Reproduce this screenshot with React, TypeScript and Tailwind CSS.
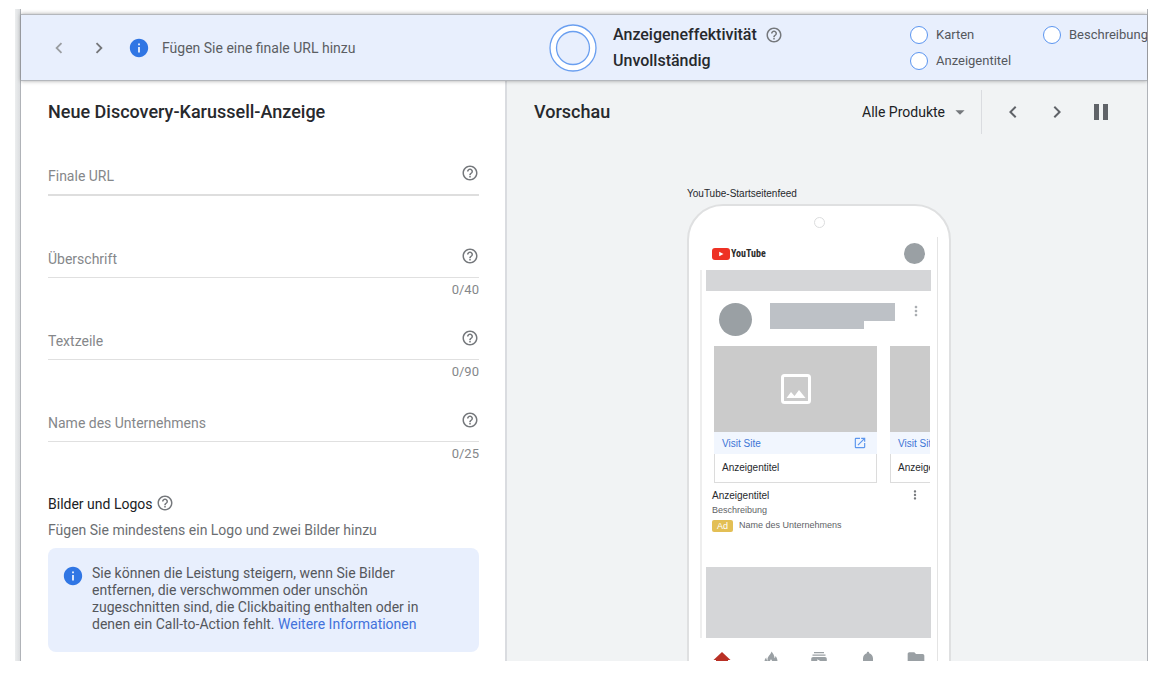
import { useState } from 'react';
import {
  MdArrowDropDown,
  MdChevronLeft,
  MdChevronRight,
  MdFolder,
  MdHelpOutline,
  MdInfo,
  MdMoreVert,
  MdOpenInNew,
} from 'react-icons/md';

const fields = [
  { id: 'url', label: 'Finale URL' },
  { id: 'headline', label: 'Überschrift', max: 40 },
  { id: 'text', label: 'Textzeile', max: 90 },
  { id: 'company', label: 'Name des Unternehmens', max: 25 },
];

function HelpButton({ label }: { label: string }) {
  return (
    <button type="button" aria-label={label} className="shrink-0 text-[#75787c]">
      <MdHelpOutline className="w-[18px] h-[18px]" />
    </button>
  );
}

function Header() {
  return (
    <header className="relative z-10 grid grid-cols-[528px_1fr] h-[67px] bg-[#e8effd] border-y border-[#b4b7bc] shadow-[0_0_4px_rgba(0,0,0,0.35)]">
      <div className="flex items-center gap-[18px] pl-[27px]">
        <button type="button" aria-label="Zurück" className="text-[#9a9da1]">
          <MdChevronLeft className="w-[22px] h-[22px]" />
        </button>
        <button type="button" aria-label="Weiter" className="text-[#757679]">
          <MdChevronRight className="w-[22px] h-[22px]" />
        </button>
        <div className="flex items-center gap-3">
          <MdInfo className="w-[22px] h-[22px] text-[#3076e4]" />
          <p className="text-sm text-[#5b5e63]">Fügen Sie eine finale URL hinzu</p>
        </div>
      </div>

      <div className="flex items-center min-w-0 overflow-hidden">
        <svg viewBox="0 0 48 48" className="w-12 h-12 shrink-0">
          <circle cx="24" cy="24" r="23" fill="#fff" stroke="#6a9ff0" strokeWidth="1.3" />
          <circle cx="24" cy="24" r="16.5" fill="#e8effd" stroke="#6a9ff0" strokeWidth="1.3" />
        </svg>
        <div className="ml-4 w-[297px] shrink-0 text-base font-medium leading-[26px] text-[#27292d]">
          <div className="flex items-center gap-2">
            Anzeigeneffektivität
            <HelpButton label="Hilfe zur Anzeigeneffektivität" />
          </div>
          <div>Unvollständig</div>
        </div>
        <ul className="grid grid-cols-[133px_133px] shrink-0 text-[13px] leading-[26px] text-[#55585d]">
          {['Karten', 'Beschreibung', 'Anzeigentitel'].map((item) => (
            <li key={item} className="flex items-center gap-2">
              <span className="w-[18px] h-[18px] rounded-full bg-white border border-[#5b95f0]" />
              {item}
            </li>
          ))}
        </ul>
      </div>
    </header>
  );
}

function AdForm() {
  const [values, setValues] = useState<Record<string, string>>({});

  return (
    <section className="bg-white pl-[27px] pr-[26px] pt-[9px] border-r-2 border-[#dadce0]">
      <h1 className="text-lg font-medium leading-[44px] text-[#27292d]">Neue Discovery-Karussell-Anzeige</h1>

      <form className="mt-6 flex flex-col gap-[21px]">
        {fields.map((f) => (
          <div key={f.id}>
            <div className={`flex ${f.max ? 'border-b border-[#e0e0e0]' : 'border-b-2 border-[#dedede]'}`}>
              <label htmlFor={f.id} className="text-sm leading-9 text-[#85878a]">{f.label}</label>
              <input
                id={f.id}
                type="text"
                maxLength={f.max}
                value={values[f.id] || ''}
                onChange={(e) => setValues({ ...values, [f.id]: e.target.value })}
                className="flex-1 min-w-0 h-9 px-3 text-sm outline-none"
              />
              <div className="pt-1.5">
                <HelpButton label={`Hilfe zu ${f.label}`} />
              </div>
            </div>
            <div className="h-6 text-right text-[13px] leading-6 text-[#85878a]">
              {f.max && `${(values[f.id] || '').length}/${f.max}`}
            </div>
          </div>
        ))}
      </form>

      <div className="mt-7">
        <div className="flex items-start gap-1">
          <h2 className="text-sm leading-5 text-[#202124]">Bilder und Logos</h2>
          <HelpButton label="Hilfe zu Bildern und Logos" />
        </div>
        <p className="mt-1.5 text-sm leading-5 text-[#6b6e72]">Fügen Sie mindestens ein Logo und zwei Bilder hinzu</p>
        <div className="mt-2 flex gap-2 rounded-lg bg-[#e8effd] pl-3.5 pr-10 pt-[17px] pb-[19px]">
          <MdInfo className="w-[22px] h-[22px] shrink-0 text-[#3076e4]" />
          <p className="text-sm leading-[17px] text-[#55575c]">
            Sie können die Leistung steigern, wenn Sie Bilder entfernen, die verschwommen oder unschön zugeschnitten
            sind, die Clickbaiting enthalten oder in denen ein Call-to-Action fehlt.{' '}
            <a href="#info" className="text-[#4272db]">Weitere Informationen</a>
          </p>
        </div>
      </div>
    </section>
  );
}

function CarouselCard() {
  return (
    <article className="w-[163px] shrink-0">
      <div className="h-[86px] bg-[#cbcbcb] flex items-center justify-center">
        <svg viewBox="0 0 30 30" className="w-[30px] h-[30px]">
          <rect x="1.5" y="1.5" width="27" height="27" rx="2" fill="none" stroke="#fff" strokeWidth="3" />
          <path d="M5.5 24l4.5-6 3.5 4 4.5-6 6.5 8z" fill="#fff" />
        </svg>
      </div>
      <div className="h-[22px] pl-2 pr-2.5 bg-[#f1f6fe] flex items-center justify-between text-[10px] text-[#3d75d6]">
        <a href="#site">Visit Site</a>
        <MdOpenInNew className="w-[14px] h-[14px] text-[#5c96ee]" />
      </div>
      <div className="pl-[7px] border border-t-0 border-[#dcdcdc] text-[10px] leading-[28px] text-[#27292d]">
        Anzeigentitel
      </div>
    </article>
  );
}

function PhoneNav() {
  return (
    <nav className="pt-[11px] pb-6 pl-3 pr-[11px] flex justify-between text-[#9aa0a4]">
      <svg viewBox="0 0 20 20" className="w-5 h-5" fill="#b93025">
        <path d="M10 3l8.5 8H16v7h-4v-5H8v5H4v-7H1.500z" />
      </svg>
      <svg viewBox="0 0 20 20" className="w-5 h-5" fill="currentColor">
        <path d="M10.500 2.500c-.5 3-4 4.500-4 8 0 .5.2 1 .5 1.500C5.700 11.300 5.200 10 5.300 8.500 3.800 10 3.500 11.500 3.500 13c0 3.300 2.900 5.500 6.500 5.500s6.500-2.400 6.500-6c0-2.200-.8-4-2-5.500 0 1-.3 1.800-1 2.300C13.500 6.500 12 4.500 10.500 2.500zM10 10c.2 1.500 2 2 2 4 0 1.200-.9 2-2 2s-2-.8-2-2c0-1.500 1.500-2.200 2-4z" />
      </svg>
      <svg viewBox="0 0 20 20" className="w-5 h-5" fill="currentColor">
        <path d="M5 3h10v1.200H5zM3.500 5.500h13v1.200h-13zM4 8h12a1.800 1.800 0 0 1 1.800 1.800v6.400A1.800 1.800 0 0 1 16 18H4a1.800 1.800 0 0 1-1.800-1.800V9.800A1.800 1.800 0 0 1 4 8zm4.300 2.300v5.400L13 13z" />
      </svg>
      <svg viewBox="0 0 20 20" className="w-5 h-5" fill="currentColor">
        <path d="M10 2.700c.7 0 1.200.5 1.200 1.200v.4c2.400.6 3.800 2.700 3.800 5.200v4l1.600 1.600v.9H3.400v-.9L5 13.500v-4c0-2.500 1.400-4.600 3.800-5.200v-.4c0-.7.5-1.200 1.200-1.200zM8.400 16.800h3.200a1.600 1.600 0 0 1-3.200 0z" />
      </svg>
      <MdFolder className="w-5 h-5" />
    </nav>
  );
}

function PhonePreview() {
  return (
    <div className="w-[264px] mt-[3px] pt-[11px] px-[11px] h-[540px] bg-white border-2 border-[#dfe0e1] rounded-[36px]">
      <div className="mx-auto w-[11px] h-[11px] rounded-full border border-[#dcddde]" />

      <div className="mt-[9px] border-r border-[#e4e4e4]">
        <div className="h-[33px] pl-3 pr-3 flex items-center justify-between">
          <div className="flex items-center gap-px">
            <svg viewBox="0 0 18 12" className="w-[18px] h-3">
              <rect width="18" height="12" rx="3" fill="#ee3124" />
              <path d="M7.2 3.8L11.5 6 7.2 8.2z" fill="#fff" />
            </svg>
            <span className="text-[10px] leading-3 font-bold text-[#2c2c2c] font-['Liberation_Sans_Narrow','Roboto_Condensed',Roboto,sans-serif]">
              YouTube
            </span>
          </div>
          <div className="w-[21px] h-[21px] rounded-full bg-[#9aa0a4]" />
        </div>

        <div className="border-l-2 border-[#eeeeee] pl-1">
          <div className="mr-1.5 h-[21px] bg-[#d5d6d8]" />

          <div className="mt-3 h-[33px] pl-[13px] flex items-start">
            <div className="w-[33px] h-[33px] rounded-full bg-[#9aa0a4]" />
            <div className="ml-[18px] w-[125px]">
              <div className="h-[18px] bg-[#bdc1c6]" />
              <div className="h-2 w-[94px] bg-[#bdc1c6]" />
            </div>
            <MdMoreVert className="ml-[13px] w-4 h-4 text-[#a9adb1]" />
          </div>

          <div className="mt-[10px] ml-2 mr-[7px] flex gap-[13px] overflow-hidden">
            <CarouselCard />
            <CarouselCard />
          </div>

          <div className="mt-[5px] ml-1.5 mr-[15px] flex justify-between">
            <div className="text-[9px] leading-[15px] text-[#606266]">
              <h3 className="text-[10px] text-[#27292d]">Anzeigentitel</h3>
              <p>Beschreibung</p>
              <p className="flex items-center gap-1.5">
                <span className="w-[21px] h-3 rounded-xs bg-[#e3bf55] text-center leading-3 text-white">Ad</span>
                Name des Unternehmens
              </p>
            </div>
            <MdMoreVert className="w-3.5 h-3.5 text-[#75787c]" />
          </div>

          <div className="mt-[34px] mr-1.5 h-[71px] bg-[#d5d6d8]" />
        </div>

        <PhoneNav />
      </div>
    </div>
  );
}

function Preview() {
  const [product, setProduct] = useState('all');

  return (
    <section className="bg-[#f1f3f4] pt-[9px]">
      <div className="flex items-center h-11 pl-[27px] pr-6">
        <h2 className="text-lg font-medium text-[#27292d]">Vorschau</h2>
        <div className="ml-auto h-full flex items-center pr-2.5 border-r border-[#dadce0]">
          <select
            aria-label="Produkte"
            value={product}
            onChange={(e) => setProduct(e.target.value)}
            className="appearance-none bg-transparent text-sm text-[#202124] outline-none"
          >
            <option value="all">Alle Produkte</option>
          </select>
          <MdArrowDropDown className="ml-1 w-[22px] h-[22px] text-[#75787c] pointer-events-none" />
        </div>
        <div className="ml-[9px] flex text-[#606368]">
          <button type="button" aria-label="Vorherige Vorschau" className="w-11 h-11 flex items-center justify-center">
            <MdChevronLeft className="w-6 h-6" />
          </button>
          <button type="button" aria-label="Nächste Vorschau" className="w-11 h-11 flex items-center justify-center">
            <MdChevronRight className="w-6 h-6" />
          </button>
          <button type="button" aria-label="Pause" className="w-11 h-11 flex items-center justify-center">
            <svg viewBox="0 0 14 16" className="w-3.5 h-4" fill="currentColor">
              <path d="M0 0h5v16H0zM9 0h5v16H9z" />
            </svg>
          </button>
        </div>
      </div>

      <div className="mt-[53px] pr-4 flex justify-center font-['Liberation_Sans',Arial,sans-serif]">
        <div>
          <p className="text-[10px] leading-[14px] text-[#27292d]">YouTube-Startseitenfeed</p>
          <PhonePreview />
        </div>
      </div>
    </section>
  );
}

export default function App() {
  return (
    <div className="h-screen bg-white pt-[9px] pb-[15px] pl-[15px] pr-[22px] font-[Roboto,Arial,sans-serif]">
      <div className="h-full flex overflow-hidden">
        <div className="w-[5px] shrink-0 bg-gradient-to-r from-[#eceeef] to-[#dcdee0]" />
        <div className="flex-1 min-w-0 flex flex-col pt-[5px] border-x border-[#b0b3b8]">
          <Header />
          <main className="flex-1 min-h-0 grid grid-cols-[486px_1fr] overflow-hidden">
            <AdForm />
            <Preview />
          </main>
        </div>
      </div>
    </div>
  );
}
